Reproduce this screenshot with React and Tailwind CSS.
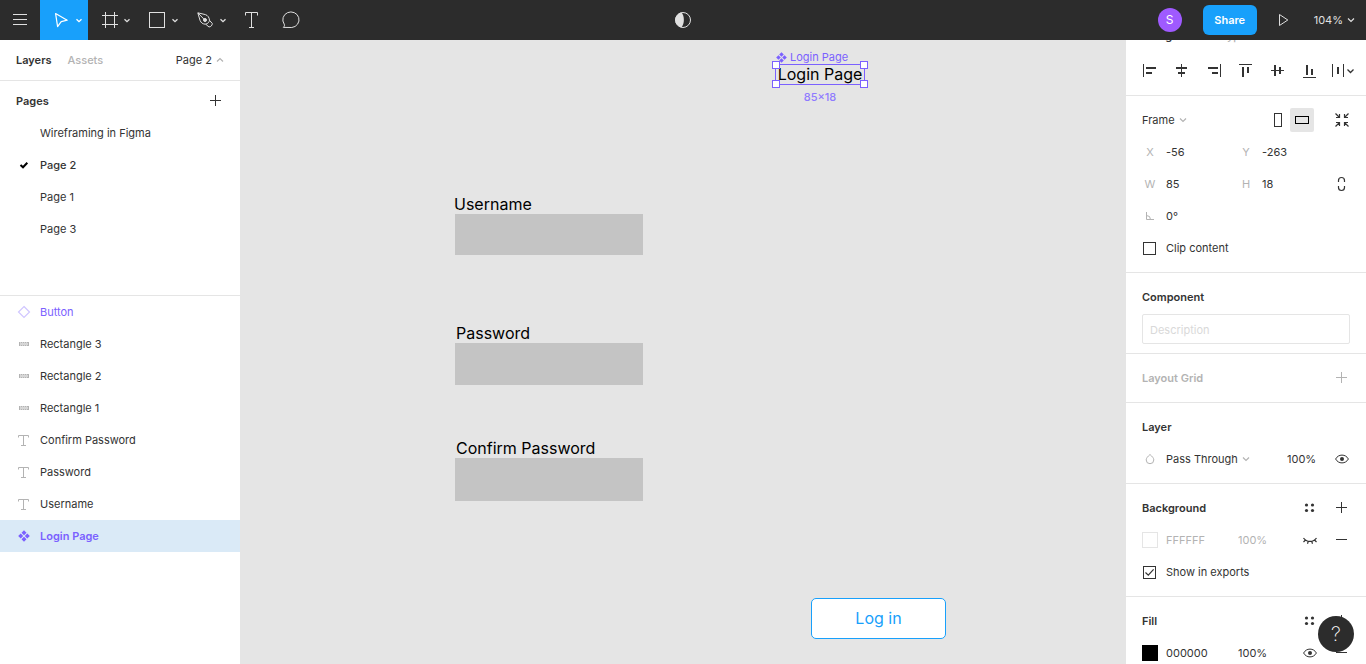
import React from "react";

function Svg({ w, h, className = "", children }) {
  return (
    <svg
      width={w}
      height={h}
      viewBox={`0 0 ${w} ${h}`}
      fill="none"
      stroke="currentColor"
      aria-hidden="true"
      className={`block shrink-0 ${className}`}
    >
      {children}
    </svg>
  );
}

const SolidRects = ({ rects }) =>
  rects.map(([x, y, w, h]) => (
    <rect key={`${x}-${y}`} x={x} y={y} width={w} height={h} fill="currentColor" stroke="none" />
  ));

const ToolChevron = () => <path d="M36.5 19.2 39 21.7l2.5-2.5" strokeWidth="1.3" />;

const SmallChevron = ({ up = false, className = "text-[#b3b3b3]" }) => (
  <Svg w={8} h={8} className={className}>
    <path d={up ? "M1 5.5 4 2.5l3 3" : "M1 2.5l3 3 3-3"} strokeWidth="1.2" />
  </Svg>
);

const ComponentIcon = ({ size = 16 }) => (
  <svg width={size} height={size} viewBox="2 2 12 12" fill="currentColor" aria-hidden="true" className="block shrink-0">
    <path d="M8 2.2 10.5 4.700 8 7.200 5.500 4.700zM8 8.800l2.500 2.500L8 13.800l-2.500-2.500zM4.700 5.500 7.200 8l-2.500 2.500L2.200 8zM11.300 5.500 13.800 8l-2.500 2.500L8.800 8z" />
  </svg>
);

const tools = [
  {
    label: "Move",
    active: true,
    menu: true,
    icon: <path d="M15.6 13.6 27.2 20.2 21.2 21.6 17.6 26.6z" strokeWidth="1.2" strokeLinejoin="round" />,
  },
  { label: "Frame", menu: true, icon: <path d="M17.5 12v16M26.5 12v16M14 15.5h16M14 24.5h16" /> },
  { label: "Rectangle", menu: true, icon: <rect x="13.5" y="12.5" width="15" height="15" /> },
  {
    label: "Pen",
    menu: true,
    icon: (
      <>
        <path d="M13.8 12.8 21.4 14.6c2.5.8 3.9 3 4.1 5.7l2.8 3.2c-.1 2-1.4 3.3-3.3 3.5l-3.3-2.8c-2.9 0-4.8-1.4-5.7-3.9z" strokeLinejoin="round" />
        <path d="M14 13l6.4 6.6M25.5 20.3c-.4 2-1.6 3.3-3.8 3.9" />
        <circle cx="21" cy="20" r="1.5" fill="currentColor" />
      </>
    ),
  },
  { label: "Text", icon: <path d="M13.5 15.5v-3h12v3M19.5 12.5v15M17 27.5h5" /> },
  {
    label: "Comment",
    icon: <path d="M11.3 27.4c1.2-1.2 1.5-2 .9-3.3A8.1 7.8 0 1 1 19.8 27.5z" strokeLinejoin="round" />,
  },
];

function Toolbar() {
  return (
    <header className="grid h-10 shrink-0 grid-cols-[1fr_auto_1fr] bg-[#2c2c2c] text-[#e0e0e0]">
      <div className="flex">
        <button aria-label="Main menu">
          <Svg w={40} h={40}>
            <path d="M13 14.5h14M13 19.5h14M13 24.5h14" />
          </Svg>
        </button>
        {tools.map((t) => (
          <button key={t.label} aria-label={t.label} className={t.active ? "bg-[#18a0fb] text-white" : ""}>
            <Svg w={t.menu ? 48 : 40} h={40}>
              {t.icon}
              {t.menu && <ToolChevron />}
            </Svg>
          </button>
        ))}
      </div>
      <button aria-label="Toggle mask">
        <Svg w={18} h={40}>
          <circle cx="9" cy="20" r="7.5" />
          <path d="M7.5 12.6a7.5 7.5 0 0 0 0 14.8c3.2-3.4 3.2-11.4 0-14.8z" fill="currentColor" stroke="none" />
        </Svg>
      </button>
      <div className="flex items-center justify-end">
        <span className="flex size-6 items-center justify-center rounded-full bg-[#9f5aff] text-[12px] text-white">S</span>
        <button className="ml-[21px] h-[30px] w-[54px] rounded-md bg-[#18a0fb] text-[11px] font-semibold text-white">
          Share
        </button>
        <button aria-label="Present" className="ml-2">
          <Svg w={36} h={40}>
            <path d="M14.5 14.5 22.8 20l-8.3 5.5z" />
          </Svg>
        </button>
        <button className="mr-[11px] ml-[13px] flex items-center gap-1">
          104%
          <SmallChevron className="text-[#e0e0e0]" />
        </button>
      </div>
    </header>
  );
}

const TypeIcon = () => (
  <Svg w={16} h={16} className="text-[#b3b3b3]">
    <path d="M2.5 5.5v-2h10v2M7.5 3.5v10M5 13.5h5" />
  </Svg>
);

const RectIcon = () => (
  <Svg w={16} h={16} className="text-[#b3b3b3]">
    <rect x="3" y="6" width="10" height="4" fill="#d6d6d6" stroke="none" />
    <path d="M3.5 6v4M12.5 6v4" />
    <path d="M5 6.5h7M5 9.5h7" strokeDasharray="1 1" />
  </Svg>
);

const DiamondIcon = () => (
  <Svg w={16} h={16} className="text-[#d0c6ff]">
    <path d="M8 2.5 13.5 8 8 13.5 2.5 8z" strokeWidth="1.2" />
  </Svg>
);

const layers = [
  { name: "Button", icon: <DiamondIcon />, style: "text-[#7b61ff]" },
  { name: "Rectangle 3", icon: <RectIcon /> },
  { name: "Rectangle 2", icon: <RectIcon /> },
  { name: "Rectangle 1", icon: <RectIcon /> },
  { name: "Confirm Password", icon: <TypeIcon /> },
  { name: "Password", icon: <TypeIcon /> },
  { name: "Username", icon: <TypeIcon /> },
  {
    name: "Login Page",
    icon: (
      <span className="flex size-4 items-center justify-center">
        <ComponentIcon size={12} />
      </span>
    ),
    style: "bg-[#daeaf7] font-semibold text-[#7b61ff]",
  },
];

function LeftPanel() {
  return (
    <aside className="w-60 shrink-0 bg-white">
      <div className="flex h-[41px] items-center border-b border-[#e5e5e5] px-4">
        <button className="font-semibold">Layers</button>
        <button className="ml-4 font-medium text-[#b3b3b3]">Assets</button>
        <button className="ml-auto flex items-center gap-1">
          Page 2
          <SmallChevron up />
        </button>
      </div>
      <section className="border-b border-[#e5e5e5] pt-1 pb-[50px]">
        <div className="flex h-8 items-center justify-between pr-2 pl-4">
          <h2 className="font-semibold">Pages</h2>
          <button aria-label="Add page">
            <Svg w={32} h={32}>
              <path d="M15.5 10v11M10 15.5h11" />
            </Svg>
          </button>
        </div>
        <ul>
          {["Wireframing in Figma", "Page 2", "Page 1", "Page 3"].map((p) => (
            <li key={p}>
              <button className={`flex h-8 w-full items-center gap-2 px-4 ${p === "Page 2" ? "font-medium" : ""}`}>
                <Svg w={16} h={16}>
                  {p === "Page 2" && <path d="M4.5 8 7 10.3l4.3-4.6" stroke="#000" strokeWidth="2" />}
                </Svg>
                {p}
              </button>
            </li>
          ))}
        </ul>
      </section>
      <ul>
        {layers.map((l) => (
          <li key={l.name}>
            <button className={`flex h-8 w-full items-center gap-2 px-4 ${l.style || ""}`}>
              {l.icon}
              {l.name}
            </button>
          </li>
        ))}
      </ul>
    </aside>
  );
}

const fields = [
  { id: "username", label: "Username", labelAt: "left-[214px] top-[155px]", boxAt: "left-[215px] top-[174px] h-[41px]" },
  { id: "password", label: "Password", labelAt: "left-[216px] top-[284px]", boxAt: "left-[215px] top-[303px] h-[42px]" },
  { id: "confirm", label: "Confirm Password", labelAt: "left-[216px] top-[399px]", boxAt: "left-[215px] top-[418px] h-[43px]" },
];

const handles = ["-left-1 -top-1", "-right-1 -top-1", "-left-1 -bottom-1", "-right-1 -bottom-1"];

function Canvas() {
  return (
    <main className="relative min-w-0 flex-1 overflow-hidden bg-[#e5e5e5] text-black">
      <div className="absolute top-[9px] left-[536px] flex items-center gap-[3px] text-[#7b61ff]">
        <ComponentIcon size={11} />
        Login Page
      </div>
      <div className="absolute top-[24px] left-[535px] flex h-[21px] w-[90px] items-start justify-center border border-[#7b61ff]">
        <span className="text-[16px] leading-[18px] whitespace-nowrap">Login Page</span>
        {handles.map((h) => (
          <span key={h} className={`absolute size-2 border border-[#7b61ff] bg-white ${h}`} />
        ))}
      </div>
      <div className="absolute top-[49px] left-[535px] w-[90px] text-center font-medium text-[#8f7bff]">85×18</div>
      {fields.map((f) => (
        <React.Fragment key={f.id}>
          <label htmlFor={f.id} className={`absolute text-[16px] leading-[18px] whitespace-nowrap ${f.labelAt}`}>
            {f.label}
          </label>
          <input id={f.id} className={`absolute w-[188px] bg-[#c4c4c4] outline-none ${f.boxAt}`} />
        </React.Fragment>
      ))}
      <button className="absolute top-[558px] left-[571px] h-[41px] w-[135px] rounded-[5px] border border-[#18a0fb] bg-white pb-0.5 text-[16px] text-[#18a0fb]">
        Log in
      </button>
    </main>
  );
}

const alignments = [
  ["Align left", [[9, 9, 1, 13], [12, 12, 10, 2], [12, 17, 6, 2]]],
  ["Align horizontal centers", [[15, 9, 1, 13], [10, 12, 11, 2], [12, 17, 7, 2]]],
  ["Align right", [[22, 9, 1, 13], [10, 12, 10, 2], [14, 17, 6, 2]]],
  ["Align top", [[9, 9, 13, 1], [12, 12, 2, 10], [17, 12, 2, 6]]],
  ["Align vertical centers", [[9, 15, 13, 1], [12, 10, 2, 11], [17, 12, 2, 7]]],
  ["Align bottom", [[9, 22, 13, 1], [12, 10, 2, 10], [17, 14, 2, 6]]],
];

const Section = ({ children, className = "" }) => (
  <section className={`border-b border-[#e5e5e5] py-2 pr-2 pl-4 ${className}`}>{children}</section>
);

const Row = ({ children }) => <div className="flex h-8 items-center">{children}</div>;

const IconButton = ({ label, children, className = "" }) => (
  <button aria-label={label} className={className}>
    <Svg w={32} h={32}>
      {children}
    </Svg>
  </button>
);

const Plus = ({ label, className }) => (
  <IconButton label={label} className={className}>
    <path d="M15.5 10v11M10 15.5h11" />
  </IconButton>
);

const Minus = ({ label }) => (
  <IconButton label={label}>
    <path d="M10 15.5h11" />
  </IconButton>
);

const Eye = ({ label }) => (
  <IconButton label={label}>
    <path d="M9.6 16c1.5-2.6 3.7-3.9 6.4-3.9s4.9 1.3 6.4 3.9c-1.5 2.6-3.7 3.9-6.4 3.9S11.1 18.6 9.6 16z" />
    <circle cx="16" cy="16" r="2" fill="currentColor" stroke="none" />
  </IconButton>
);

const ClosedEye = ({ label }) => (
  <IconButton label={label}>
    <path d="M9.5 14c1.5 2.3 3.7 3.4 6.5 3.4s5-1.1 6.5-3.4M11.5 16l-2 2M14.3 17.3l-.8 2.4M17.7 17.3l.8 2.4M20.5 16l2 2" strokeWidth="1.2" />
  </IconButton>
);

const Dots = ({ label }) => (
  <IconButton label={label}>
    {[12.5, 18.5].map((x) =>
      [13, 18.5].map((y) => <circle key={`${x}-${y}`} cx={x} cy={y} r="1.6" fill="currentColor" stroke="none" />)
    )}
  </IconButton>
);

const Field = ({ label, icon, value }) => (
  <label className="flex w-24 items-center gap-2">
    <span className="flex w-4 justify-center text-[#b3b3b3]">{icon || label}</span>
    <input aria-label={label} defaultValue={value} className="w-14 bg-transparent outline-none" />
  </label>
);

const Check = ({ label, checked }) => (
  <label className="flex items-center gap-2">
    <span className="grid w-4 grid-cols-[15px] place-items-center">
      <input
        type="checkbox"
        defaultChecked={checked}
        className="peer col-start-1 row-start-1 size-[13px] appearance-none border border-[#333]"
      />
      <svg
        width="13"
        height="13"
        viewBox="0 0 13 13"
        fill="none"
        stroke="currentColor"
        strokeWidth="1.2"
        aria-hidden="true"
        className="pointer-events-none invisible col-start-1 row-start-1 peer-checked:visible"
      >
        <path d="M2.5 6.5 5.3 9.2l5.300-5.900" />
      </svg>
    </span>
    {label}
  </label>
);

const Dropdown = ({ label, value }) => (
  <label className="flex items-center gap-1">
    <select aria-label={label} className="field-sizing-content appearance-none bg-transparent outline-none">
      <option>{value}</option>
    </select>
    <SmallChevron />
  </label>
);

function Paint({ swatch, hex, muted }) {
  return (
    <Row>
      <button aria-label="Pick color" className={`size-4 border ${swatch}`} />
      <input
        aria-label="Hex color"
        defaultValue={hex}
        className={`ml-2 w-[72px] bg-transparent outline-none ${muted ? "text-[#b3b3b3]" : ""}`}
      />
      <input
        aria-label="Opacity"
        defaultValue="100%"
        className={`w-14 bg-transparent outline-none ${muted ? "text-[#b3b3b3]" : ""}`}
      />
      {muted ? <ClosedEye label="Show paint" /> : <Eye label="Hide paint" />}
      <Minus label="Remove paint" />
    </Row>
  );
}

function RightPanel() {
  return (
    <aside className="w-60 shrink-0 overflow-hidden bg-white">
      <section className="border-b border-[#e5e5e5] pb-2">
        <div className="flex h-[15px] items-start gap-4 overflow-hidden px-4">
          <button className="-mt-3 font-semibold">Design</button>
          <button className="-mt-3 font-medium text-[#b3b3b3]">Prototype</button>
        </div>
        <div className="flex px-2">
          {alignments.map(([label, rects]) => (
            <IconButton key={label} label={label}>
              <SolidRects rects={rects} />
            </IconButton>
          ))}
          <IconButton label="Distribute">
            <SolidRects rects={[[6, 9, 1, 13], [11, 12, 2, 7], [17, 9, 1, 13]]} />
            <path d="M21.5 14.5 24.5 17.5 27.5 14.5" strokeWidth="1.3" />
          </IconButton>
        </div>
      </section>

      <Section>
        <Row>
          <Dropdown label="Frame type" value="Frame" />
          <button aria-label="Portrait" className="ml-auto">
            <Svg w={24} h={24}>
              <rect x="8.5" y="5.5" width="7" height="13" />
            </Svg>
          </button>
          <button aria-label="Landscape" className="mr-3 rounded-xs bg-[#e5e5e5] text-black">
            <Svg w={24} h={24}>
              <rect x="5.5" y="8.5" width="13" height="7" />
            </Svg>
          </button>
          <IconButton label="Resize to fit">
            <path
              d="M9.5 9.5l4 4M13.5 10v3.5H10M22.5 9.5l-4 4M18.5 10v3.5H22M9.5 22.5l4-4M13.5 22v-3.5H10M22.5 22.5l-4-4M18.5 22v-3.5H22"
              strokeWidth="1.2"
            />
          </IconButton>
        </Row>
        <Row>
          <Field label="X" value="-56" />
          <Field label="Y" value="-263" />
        </Row>
        <Row>
          <Field label="W" value="85" />
          <Field label="H" value="18" />
          <IconButton label="Constrain proportions" className="-ml-2">
            <path d="M12.5 14v-1.5a3 3 0 0 1 6 0V14M12.5 18v1.5a3 3 0 0 0 6 0V18" strokeWidth="1.2" />
          </IconButton>
        </Row>
        <Row>
          <Field
            label="Rotation"
            value="0°"
            icon={
              <Svg w={10} h={10}>
                <path d="M1.5 1v7.5H9M1.5 4.5a4 4 0 0 1 4 4" />
              </Svg>
            }
          />
        </Row>
        <Row>
          <Check label="Clip content" />
        </Row>
      </Section>

      <Section className="pb-0">
        <Row>
          <h2 className="font-semibold">Component</h2>
        </Row>
        <div className="h-10 pt-px pr-2">
          <input
            aria-label="Component description"
            placeholder="Description"
            className="h-[30px] w-full rounded-xs border border-[#e5e5e5] px-[7px] pt-0.5 outline-none placeholder:text-[#d9d9d9]"
          />
        </div>
      </Section>

      <Section>
        <Row>
          <h2 className="font-semibold text-[#b3b3b3]">Layout Grid</h2>
          <Plus label="Add layout grid" className="ml-auto text-[#b3b3b3]" />
        </Row>
      </Section>

      <Section>
        <Row>
          <h2 className="font-semibold">Layer</h2>
        </Row>
        <Row>
          <Svg w={16} h={16} className="mr-2 text-[#b3b3b3]">
            <path d="M8 3.5c2.4 2.1 3.8 3.8 3.8 5.4a3.8 3.8 0 0 1-7.6 0c0-1.6 1.4-3.3 3.8-5.4z" />
          </Svg>
          <Dropdown label="Blend mode" value="Pass Through" />
          <input aria-label="Layer opacity" defaultValue="100%" className="ml-auto w-[39px] bg-transparent outline-none" />
          <Eye label="Hide layer" />
        </Row>
      </Section>

      <Section>
        <Row>
          <h2 className="mr-auto font-semibold">Background</h2>
          <Dots label="Background styles" />
          <Plus label="Add background" />
        </Row>
        <Paint swatch="border-[#e5e5e5] bg-white" hex="FFFFFF" muted />
        <Row>
          <Check label="Show in exports" checked />
        </Row>
      </Section>

      <Section>
        <Row>
          <h2 className="mr-auto font-semibold">Fill</h2>
          <Dots label="Fill styles" />
          <Plus label="Add fill" />
        </Row>
        <Paint swatch="border-black bg-black" hex="000000" />
      </Section>
    </aside>
  );
}

export default function App() {
  return (
    <div className="relative flex h-screen flex-col overflow-hidden font-['Inter',sans-serif] text-[11px] leading-4 text-[#333]">
      <Toolbar />
      <div className="flex min-h-0 flex-1">
        <LeftPanel />
        <Canvas />
        <RightPanel />
      </div>
      <button
        aria-label="Help"
        className="absolute right-3 bottom-3 flex size-9 items-center justify-center rounded-full bg-[#2c2c2c] text-[20px] font-extralight text-white"
      >
        ?
      </button>
    </div>
  );
}
